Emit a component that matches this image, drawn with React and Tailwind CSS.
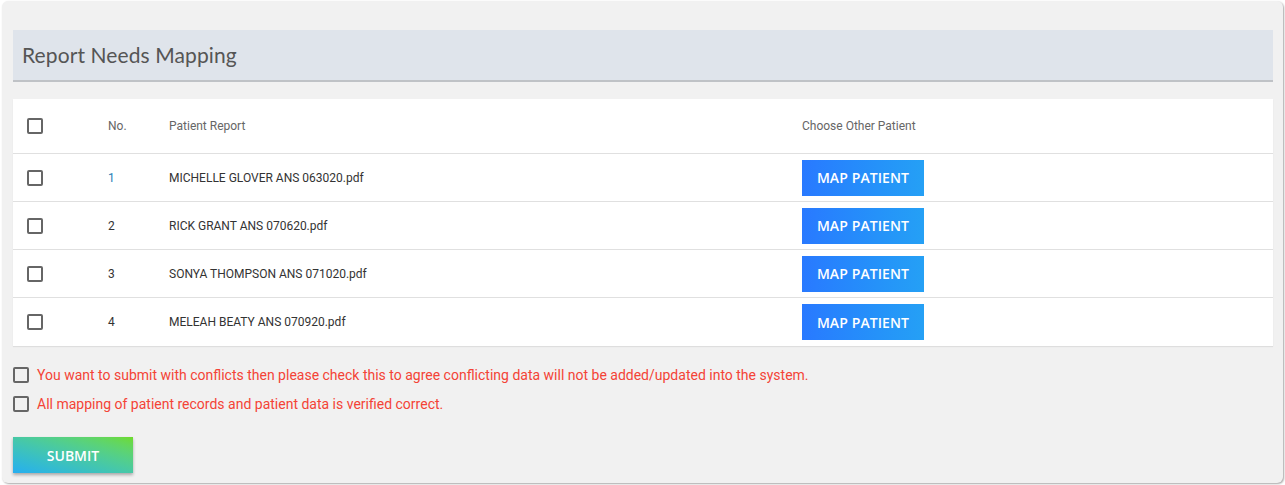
import { useState } from 'react';

const rows = [
    { no: 1, file: 'MICHELLE GLOVER ANS 063020.pdf' },
    { no: 2, file: 'RICK GRANT ANS 070620.pdf' },
    { no: 3, file: 'SONYA THOMPSON ANS 071020.pdf' },
    { no: 4, file: 'MELEAH BEATY ANS 070920.pdf' },
];

const Box = ({ checked, onChange }) => (
    <button
        type="button"
        onClick={onChange}
        className={`w-4 h-4 shrink-0 rounded-[2px] border-2 ${checked ? 'bg-[#2979ff] border-[#2979ff]' : 'border-[#666] bg-transparent'}`}
    />
);

const App = () => {
    const [checked, setChecked] = useState({});
    const toggle = (k) => setChecked((c) => ({ ...c, [k]: !c[k] }));

    return (
        <div className="min-h-screen bg-white pt-px pl-[2px] pr-[2px] pb-[2px]" style={{ fontFamily: 'Roboto, "Liberation Sans", sans-serif' }}>
            <div className="bg-[#f1f1f1] rounded-md shadow-[1px_1px_2px_rgba(0,0,0,0.35)] pt-[29px] pl-[11px] pr-[10px] pb-[10px]">
                <div className="h-[52px] bg-[#dfe4eb] border-b-2 border-[#bfc2c6] flex items-center pl-[9px]">
                    <h2 className="text-[21px] text-[#555] tracking-[0.1px]" style={{ fontFamily: 'Lato, "Open Sans", sans-serif' }}>
                        Report Needs Mapping
                    </h2>
                </div>

                <div className="mt-[17px] bg-white shadow-[0_1px_1px_rgba(0,0,0,0.08)]">
                    <div className="grid grid-cols-[81px_61px_633px_1fr] items-center h-[55px] pl-[14px] border-b border-[#e0e0e0] text-[12px] text-[#666]">
                        <Box checked={checked.all} onChange={() => toggle('all')} />
                        <span>No.</span>
                        <span>Patient Report</span>
                        <span>Choose Other Patient</span>
                    </div>
                    {rows.map((r, i) => (
                        <div
                            key={r.no}
                            className={`grid grid-cols-[81px_61px_633px_1fr] items-center h-[48px] pl-[14px] text-[12px] text-[#333] ${i < rows.length - 1 ? 'border-b border-[#e0e0e0]' : ''}`}
                        >
                            <Box checked={checked[r.no]} onChange={() => toggle(r.no)} />
                            <span className={i === 0 ? 'text-[#2a7fb8]' : ''}>{r.no}</span>
                            <span>{r.file}</span>
                            <div>
                                <button className="w-[122px] h-[36px] bg-gradient-to-r from-[#2979ff] to-[#25a0f5] text-white text-[14px] font-semibold tracking-[0.1px]" style={{ fontFamily: '"Open Sans", Lato, sans-serif' }}>
                                    MAP PATIENT
                                </button>
                            </div>
                        </div>
                    ))}
                </div>

                <div className="mt-[19px] flex flex-col gap-[9px] text-[14px] leading-5 text-[#f44336]">
                    <label className="flex items-center gap-2">
                        <Box checked={checked.c1} onChange={() => toggle('c1')} />
                        <span>You want to submit with conflicts then please check this to agree conflicting data will not be added/updated into the system.</span>
                    </label>
                    <label className="flex items-center gap-2">
                        <Box checked={checked.c2} onChange={() => toggle('c2')} />
                        <span>All mapping of patient records and patient data is verified correct.</span>
                    </label>
                </div>

                <button
                    className="mt-[23px] w-[120px] h-[36px] bg-gradient-to-tr from-[#27aef0] to-[#6edb26] text-white text-[14px] font-semibold shadow-[0_2px_3px_rgba(0,0,0,0.3)]"
                    style={{ fontFamily: '"Open Sans", Lato, sans-serif' }}
                >
                    SUBMIT
                </button>
            </div>
        </div>
    );
};

export default App;
